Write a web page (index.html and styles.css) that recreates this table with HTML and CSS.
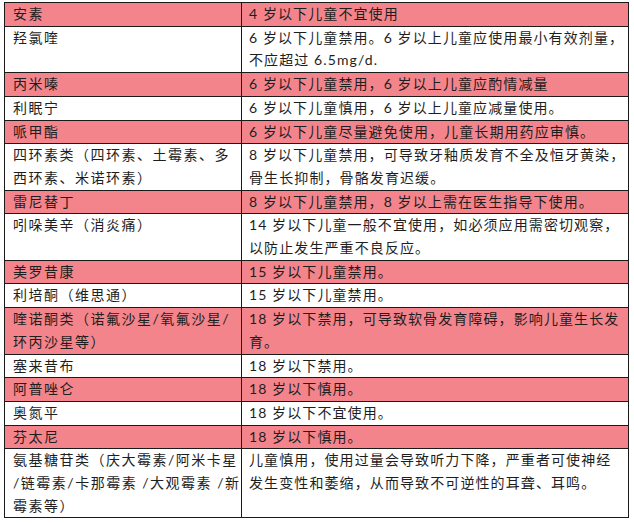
FILE: index.html
```html
<!DOCTYPE html>
<html lang="zh">
<head>
<meta charset="utf-8">
<link rel="stylesheet" href="styles.css">
</head>
<body>
<table class="drug-table">
  <colgroup><col class="col-name"><col class="col-note"></colgroup>
  <tbody>
    <tr class="pink"><td>安素</td><td>4 岁以下儿童不宜使用</td></tr>
    <tr><td>羟氯喹</td><td>6 岁以下儿童禁用。6 岁以上儿童应使用最小有效剂量，<br>不应超过 6.5mg/d.</td></tr>
    <tr class="pink"><td>丙米嗪</td><td>6 岁以下儿童禁用，6 岁以上儿童应酌情减量</td></tr>
    <tr><td>利眠宁</td><td>6 岁以下儿童慎用，6 岁以上儿童应减量使用。</td></tr>
    <tr class="pink"><td>哌甲酯</td><td>6 岁以下儿童尽量避免使用，儿童长期用药应审慎。</td></tr>
    <tr><td>四环素类（四环素、土霉素、多<br>西环素、米诺环素）</td><td>8 岁以下儿童禁用，可导致牙釉质发育不全及恒牙黄染，<br>骨生长抑制，骨骼发育迟缓。</td></tr>
    <tr class="pink"><td>雷尼替丁</td><td>8 岁以下儿童禁用，8 岁以上需在医生指导下使用。</td></tr>
    <tr><td>吲哚美辛（消炎痛）</td><td>14 岁以下儿童一般不宜使用，如必须应用需密切观察，<br>以防止发生严重不良反应。</td></tr>
    <tr class="pink"><td>美罗昔康</td><td>15 岁以下儿童禁用。</td></tr>
    <tr><td>利培酮（维思通）</td><td>15 岁以下儿童禁用。</td></tr>
    <tr class="pink"><td>喹诺酮类（诺氟沙星/氧氟沙星/<br>环丙沙星等）</td><td>18 岁以下禁用，可导致软骨发育障碍，影响儿童生长发<br>育。</td></tr>
    <tr><td>塞来昔布</td><td>18 岁以下禁用。</td></tr>
    <tr class="pink"><td>阿普唑仑</td><td>18 岁以下慎用。</td></tr>
    <tr><td>奥氮平</td><td>18 岁以下不宜使用。</td></tr>
    <tr class="pink"><td>芬太尼</td><td>18 岁以下慎用。</td></tr>
    <tr><td>氨基糖苷类（庆大霉素/阿米卡星<br>/链霉素/卡那霉素 /大观霉素 /新<br>霉素等）</td><td>儿童慎用，使用过量会导致听力下降，严重者可使神经<br>发生变性和萎缩，从而导致不可逆性的耳聋、耳鸣。</td></tr>
  </tbody>
</table>
</body>
</html>
```

FILE: styles.css
```css
html, body {
  margin: 0;
  padding: 0;
  background: #ffffff;
}

body {
  padding: 2px 0 0 4px;
}

.drug-table {
  border-collapse: collapse;
  table-layout: fixed;
  width: 624px;
  font-family: Lato, "Noto Sans CJK SC", sans-serif;
  font-size: 14px;
  color: #1e1e1e;
}

.col-name {
  width: 237px;
}

.col-note {
  width: 387px;
}

.drug-table td {
  border: 1px solid #1a1a1a;
  padding: 0 0 0 7px;
  line-height: 22.7px;
  vertical-align: top;
  white-space: nowrap;
  overflow: hidden;
  letter-spacing: 1.1px;
}

.drug-table td:first-child {
  padding-left: 8px;
  letter-spacing: 1.5px;
}

.drug-table tr.pink td {
  background: #f3848b;
}
```
